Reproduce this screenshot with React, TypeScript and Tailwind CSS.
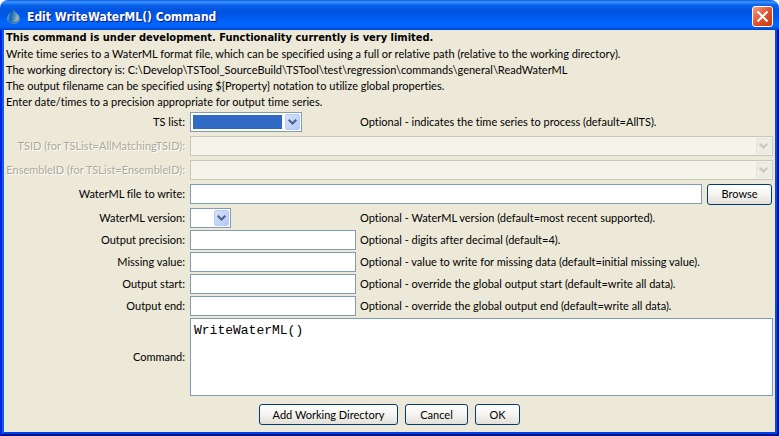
import { useState, type ReactNode } from "react";

const INTRO_LINES = [
  "Write time series to a WaterML format file, which can be specified using a full or relative path (relative to the working directory).",
  "The working directory is: C:\\Develop\\TSTool_SourceBuild\\TSTool\\test\\regression\\commands\\general\\ReadWaterML",
  "The output filename can be specified using ${Property} notation to utilize global properties.",
  "Enter date/times to a precision appropriate for output time series.",
];

const TEXT_FIELDS = [
  { id: "precision", label: "Output precision:", hint: "Optional - digits after decimal (default=4)." },
  { id: "missing", label: "Missing value:", hint: "Optional - value to write for missing data (default=initial missing value)." },
  { id: "start", label: "Output start:", hint: "Optional - override the global output start (default=write all data)." },
  { id: "end", label: "Output end:", hint: "Optional - override the global output end (default=write all data)." },
];

const INPUT = "h-5 border border-[#7f9db9] bg-white px-1 outline-none";

function DropIcon() {
  return (
    <svg width="15" height="17" viewBox="0 0 15 17" aria-hidden="true">
      <defs>
        <linearGradient id="drop" x1="0" y1="0.4" x2="1" y2="0.7">
          <stop offset="0" stopColor="#5aaade" />
          <stop offset="0.3" stopColor="#1d6cb4" />
          <stop offset="0.55" stopColor="#4a8cbc" />
          <stop offset="0.8" stopColor="#a3b4bc" />
          <stop offset="1" stopColor="#4a80b0" />
        </linearGradient>
      </defs>
      <path d="M7 0.500C6 4 1 6.500 1 10.500C1 14 4 16 7.500 16C11 16 14 14 14 10.800C14 7 8.500 4 7 0.500Z" fill="url(#drop)" />
      <path d="M7 1C6 4.500 4.500 7 4.500 10C4.500 11.500 5 12.500 6 13" fill="none" stroke="#0c4a90" strokeWidth="1.500" opacity="0.4" />
      <path d="M3 12.500C5 15 9.500 15.500 12 13.500" fill="none" stroke="#2c78b8" strokeWidth="1.500" />
    </svg>
  );
}

function CloseButton() {
  return (
    <button
      type="button"
      aria-label="Close"
      className="flex size-[21px] items-center justify-center rounded-[3px] border border-white bg-linear-to-br from-[#f0a088] via-[#e0502a] to-[#c63a10]"
    >
      <svg width="13" height="13" viewBox="0 0 13 13" aria-hidden="true">
        <path d="M1.500 1.500L11.500 11.500M11.500 1.500L1.500 11.500" stroke="#fff" strokeWidth="2.200" />
      </svg>
    </button>
  );
}

function Combo({ id, width, disabled = false, selected = false }: { id: string; width: string; disabled?: boolean; selected?: boolean }) {
  return (
    <div className={`relative h-5 ${width} ${disabled ? "bg-[#f5f4ea]" : "bg-white"}`}>
      <select
        id={id}
        disabled={disabled}
        className={`block h-5 w-full appearance-none border py-0.5 pr-[19px] pl-0.5 bg-clip-content opacity-100 outline-none ${
          disabled ? "border-[#c9c7ba]" : "border-[#7f9db9]"
        } ${selected ? "bg-[#316ac5] text-white" : "bg-transparent"}`}
      >
        <option value=""></option>
      </select>
      <span
        className={`pointer-events-none absolute top-0.5 right-0.5 flex h-4 w-[15px] items-center justify-center rounded-xs border ${
          disabled
            ? "border-[#e8e6dc] bg-[#eeede5] text-[#c9c7ba]"
            : "border-[#b9cbf3] bg-linear-to-br from-[#d6e2fd] to-[#b3c9f8] text-[#4d6185]"
        }`}
      >
        <svg width="9" height="6" viewBox="0 0 9 6" aria-hidden="true">
          <path d="M0.700 0.700L4.500 4.500L8.300 0.700" fill="none" stroke="currentColor" strokeWidth="2" />
        </svg>
      </span>
    </div>
  );
}

function Row({ id, label, disabled = false, children }: { id: string; label: string; disabled?: boolean; children: ReactNode }) {
  return (
    <div className="flex items-center gap-1">
      <label
        htmlFor={id}
        className={`w-[180px] shrink-0 pr-px text-right whitespace-nowrap ${
          disabled ? "text-[#aca899] [text-shadow:1px_1px_0_#fff]" : ""
        }`}
      >
        {label}
      </label>
      {children}
    </div>
  );
}

function Hint({ children }: { children: ReactNode }) {
  return <span className="whitespace-nowrap">{children}</span>;
}

function PushButton({ children, className }: { children: ReactNode; className: string }) {
  return (
    <button
      type="button"
      className={`h-[21px] shrink-0 rounded-[3px] border border-[#003c74] bg-linear-to-b from-white via-[#f5f4f0] to-[#e3e0d8] whitespace-nowrap ${className}`}
    >
      {children}
    </button>
  );
}

export default function App() {
  const [command, setCommand] = useState("WriteWaterML()");

  return (
    <main className="bg-white font-[Lato,'Liberation_Sans',sans-serif] text-[11px] leading-4 text-black [font-variant-ligatures:none]">
      <div className="overflow-hidden rounded-t-lg">
        <header className="flex h-[30px] items-center gap-1.5 bg-[linear-gradient(to_bottom,#0a5ae0_0,#3d95ff_2px,#0a62ea_5px,#0054e0_10px,#0058e8_16px,#0066ff_24px,#0060f6_27px,#0042c8_30px)] pt-[3px] pr-[6px] pl-[6px]">
          <DropIcon />
          <h1 className="flex-1 font-['DejaVu_Sans_Condensed','DejaVu_Sans',sans-serif] text-xs font-bold text-white [text-shadow:1px_1px_0_#0a1883]">
            Edit WriteWaterML() Command
          </h1>
          <CloseButton />
        </header>

        <div className="border-x-2 border-b-2 border-t-0 border-l-[#0024d8] border-r-[#00138c] border-b-[#00138c]">
          <div className="border-x-2 border-b-2 border-l-[#0c5ef0] border-r-[#0048f0] border-b-[#0040e8]">
            <form className="bg-[#ece9d8] px-0.5 pb-[7px]" onSubmit={(e) => e.preventDefault()}>
              <div className="whitespace-nowrap">
                <p className="font-['DejaVu_Sans_Condensed','DejaVu_Sans',sans-serif] font-bold">
                  This command is under development. Functionality currently is very limited.
                </p>
                {INTRO_LINES.map((line) => (
                  <p key={line}>{line}</p>
                ))}
              </div>

              <div className="mt-0.5 flex flex-col gap-1">
                <Row id="tslist" label="TS list:">
                  <div className="w-[166px]">
                    <Combo id="tslist" width="w-28" selected />
                  </div>
                  <Hint>Optional - indicates the time series to process (default=AllTS).</Hint>
                </Row>
                <Row id="tsid" label="TSID (for TSList=AllMatchingTSID):" disabled>
                  <Combo id="tsid" width="flex-1" disabled />
                </Row>
                <Row id="ensemble" label="EnsembleID (for TSList=EnsembleID):" disabled>
                  <Combo id="ensemble" width="flex-1" disabled />
                </Row>
                <Row id="file" label="WaterML file to write:">
                  <input id="file" type="text" className={`min-w-0 flex-1 ${INPUT}`} />
                  <PushButton className="mx-px -my-px w-[65px]">Browse</PushButton>
                </Row>
                <Row id="version" label="WaterML version:">
                  <div className="w-[166px]">
                    <Combo id="version" width="w-[41px]" />
                  </div>
                  <Hint>Optional - WaterML version (default=most recent supported).</Hint>
                </Row>
              </div>

              <div className="mt-0.5 flex flex-col gap-0.5">
                {TEXT_FIELDS.map((field) => (
                  <Row key={field.id} id={field.id} label={field.label}>
                    <input id={field.id} type="text" className={`w-[166px] ${INPUT}`} />
                    <Hint>{field.hint}</Hint>
                  </Row>
                ))}
                <Row id="command" label="Command:">
                  <textarea
                    id="command"
                    value={command}
                    onChange={(e) => setCommand(e.target.value)}
                    className="block h-[78px] min-w-0 flex-1 resize-none border border-[#7f9db9] bg-white px-[3px] py-1 font-['Liberation_Mono',monospace] text-[13px] leading-4 outline-none"
                  />
                </Row>
              </div>

              <div className="mt-2 flex justify-center gap-[7px]">
                <PushButton className="w-[139px]">Add Working Directory</PushButton>
                <PushButton className="w-[63px]">Cancel</PushButton>
                <PushButton className="w-[45px]">OK</PushButton>
              </div>
            </form>
          </div>
        </div>
      </div>
    </main>
  );
}
